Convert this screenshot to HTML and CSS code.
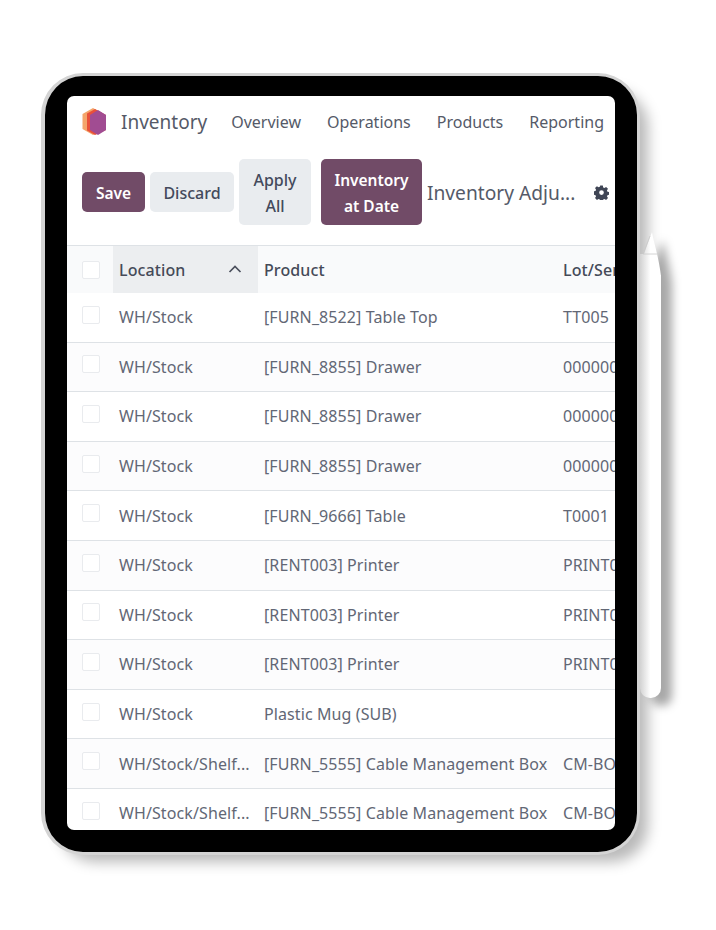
FILE: index.html
```html
<!DOCTYPE html>
<html lang="en">
<head>
    <meta charset="UTF-8">
    <meta name="viewport" content="width=device-width, initial-scale=1.0">
    <title>Inventory Adjustments</title>
    <link rel="stylesheet" href="styles.css">
</head>
<body>
    <div class="device">
        <div class="tablet">
            <div class="screen">
                <nav class="topbar">
                    <svg class="logo" width="26" height="28" viewBox="0 0 26 28">
                        <path d="M12 0 L22 5.5 L22 22 L12 27 L1.5 21 L1.5 6 Z" fill="#f4a56a"/>
                        <path d="M14 1 L25 7 L25 22 L14 27 L6 22.5 L6 5.5 Z" fill="#e8503a"/>
                        <path d="M17 2 L25 7 L25 22 L17 27 L9 22 L9 7 Z" fill="#a14c92"/>
                    </svg>
                    <span class="app-name">Inventory</span>
                    <a class="nav-link">Overview</a>
                    <a class="nav-link">Operations</a>
                    <a class="nav-link">Products</a>
                    <a class="nav-link">Reporting</a>
                </nav>

                <div class="toolbar">
                    <button class="btn btn-primary btn-save">Save</button>
                    <button class="btn btn-light btn-discard">Discard</button>
                    <button class="btn btn-light btn-tall">Apply<br>All</button>
                    <button class="btn btn-primary btn-tall btn-wide">Inventory<br>at Date</button>
                    <span class="page-title">Inventory Adju...</span>
                    <svg class="gear" width="15" height="15" viewBox="0 0 16 16">
                        <path fill-rule="evenodd" fill="#3f4555" d="M6.6 0.6h2.8l.4 2 1.3.6 1.8-1.1 2 2-1.1 1.8.6 1.3 2 .4v2.8l-2 .4-.6 1.3 1.1 1.8-2 2-1.8-1.1-1.3.6-.4 2H6.6l-.4-2-1.3-.6-1.8 1.1-2-2 1.1-1.8-.6-1.3-2-.4V6.8l2-.4.6-1.3-1.1-1.8 2-2 1.8 1.1 1.3-.6zM8 5.6a2.5 2.5 0 1 0 0 5 2.5 2.5 0 0 0 0-5z"/>
                    </svg>
                </div>

                <table class="list">
                    <thead>
                        <tr>
                            <th class="col-check"><span class="check"></span></th>
                            <th class="col-location sorted">
                                Location
                                <svg class="caret" width="14" height="8" viewBox="0 0 14 8"><path d="M1.5 7 L7 1.5 L12.5 7" fill="none" stroke="#4a4f5c" stroke-width="1.7"/></svg>
                            </th>
                            <th class="col-product">Product</th>
                            <th class="col-lot">Lot/Serial</th>
                        </tr>
                    </thead>
                    <tbody>
                        <tr><td><span class="check"></span></td><td>WH/Stock</td><td>[FURN_8522] Table Top</td><td>TT005</td></tr>
                        <tr><td><span class="check"></span></td><td>WH/Stock</td><td>[FURN_8855] Drawer</td><td>0000001</td></tr>
                        <tr><td><span class="check"></span></td><td>WH/Stock</td><td>[FURN_8855] Drawer</td><td>0000002</td></tr>
                        <tr><td><span class="check"></span></td><td>WH/Stock</td><td>[FURN_8855] Drawer</td><td>0000003</td></tr>
                        <tr><td><span class="check"></span></td><td>WH/Stock</td><td>[FURN_9666] Table</td><td>T0001</td></tr>
                        <tr><td><span class="check"></span></td><td>WH/Stock</td><td>[RENT003] Printer</td><td>PRINT001</td></tr>
                        <tr><td><span class="check"></span></td><td>WH/Stock</td><td>[RENT003] Printer</td><td>PRINT002</td></tr>
                        <tr><td><span class="check"></span></td><td>WH/Stock</td><td>[RENT003] Printer</td><td>PRINT003</td></tr>
                        <tr><td><span class="check"></span></td><td>WH/Stock</td><td>Plastic Mug (SUB)</td><td></td></tr>
                        <tr><td><span class="check"></span></td><td>WH/Stock/Shelf...</td><td>[FURN_5555] Cable Management Box</td><td>CM-BOX-001</td></tr>
                        <tr><td><span class="check"></span></td><td>WH/Stock/Shelf...</td><td>[FURN_5555] Cable Management Box</td><td>CM-BOX-002</td></tr>
                    </tbody>
                </table>
            </div>
        </div>

        <!-- pencil docked on the right edge of the tablet -->
        <div class="pencil">
            <svg class="pencil-tip" width="21" height="44" viewBox="0 0 21 44">
                <defs>
                    <linearGradient id="tipFade" x1="0" x2="1" y1="0" y2="0">
                        <stop offset="0" stop-color="#d2d2d2"/>
                        <stop offset="0.5" stop-color="#fff"/>
                    </linearGradient>
                </defs>
                <path d="M12 0 C14 12 19 26 21 44 L0 44 L0 22 L4 22 Z" fill="url(#tipFade)"/>
                <path d="M3 22 L10 4 M3 22 L17 22" fill="none" stroke="#c9c9c9" stroke-width="0.8"/>
            </svg>
            <div class="pencil-body"></div>
        </div>
    </div>
</body>
</html>
```

FILE: styles.css
```css
* {
    margin: 0;
    padding: 0;
    box-sizing: border-box;
}

body {
    font-family: "Noto Sans", "Open Sans", sans-serif;
    background: white;
    height: 930px;
    overflow: hidden;
    padding: 73px 0 0 41px;
}

.device {
    position: relative;
    width: 599px;
    height: 782px;
}

.tablet {
    width: 599px;
    height: 782px;
    background: #000;
    border: 3px solid #d4d4d4;
    border-left-width: 4px;
    border-radius: 42px;
    padding: 20px 22px 22px 22px;
    box-shadow: 13px 12px 14px -5px rgba(0, 0, 0, 0.28);
}

.screen {
    width: 548px;
    height: 734px;
    background: white;
    border-radius: 7px;
    overflow: hidden;
}

.pencil {
    position: absolute;
    left: 599px;
    top: 159px;
    width: 21px;
    filter: drop-shadow(11px 8px 5px rgba(0, 0, 0, 0.34));
}

.pencil-tip {
    display: block;
}

.pencil-body {
    width: 21px;
    height: 423px;
    margin-top: -1px;
    background: linear-gradient(90deg, #d2d2d2, #fff 50%);
    border-radius: 0 0 10px 10px;
}

.topbar {
    display: flex;
    align-items: center;
    height: 52px;
    padding-left: 14px;
}

.logo {
    margin-right: 14px;
    flex-shrink: 0;
}

.app-name {
    font-size: 19px;
    color: #555a68;
    margin-right: 24px;
}

.nav-link {
    font-size: 16px;
    color: #555a68;
    margin-right: 26px;
    white-space: nowrap;
}

.toolbar {
    display: flex;
    align-items: center;
    height: 97px;
    padding: 0 15px 9px;
    gap: 5px;
}

.btn {
    height: 40px;
    border: none;
    border-radius: 5px;
    padding-top: 2px;
    font-family: inherit;
    font-size: 16px;
    font-weight: 500;
    line-height: 26px;
    flex-shrink: 0;
}

.btn-primary {
    background-color: #714b67;
    color: white;
    font-weight: 600;
    font-size: 15.5px;
}

.btn-light {
    background-color: #e9ecef;
    color: #434a5c;
}

.btn-save {
    width: 63px;
}

.btn-discard {
    width: 84px;
}

.btn-tall {
    height: 66px;
    width: 72px;
}

.btn-wide {
    width: 101px;
    margin-left: 5px;
}

.page-title {
    font-size: 19.2px;
    color: #555a68;
    white-space: nowrap;
    margin-right: 14px;
}

.gear {
    flex-shrink: 0;
}

.list {
    width: 548px;
    table-layout: fixed;
    border-collapse: collapse;
    border-top: 1px solid #dee2e6;
    font-size: 16px;
    letter-spacing: 0.1px;
    color: #626775;
}

.list th {
    height: 47px;
    background: #f9fafb;
    color: #454a58;
    font-weight: 500;
    text-align: left;
    padding: 1px 6px 0;
}

.list td {
    height: 49.6px;
    padding: 0 6px;
    border-bottom: 1px solid #dee2e6;
    white-space: nowrap;
    overflow: hidden;
}

.list tbody tr:nth-child(even) td {
    background: #fcfcfd;
}

.col-check {
    width: 46px;
}

.col-location {
    width: 145px;
}

.col-product {
    width: 299px;
}

.col-lot {
    width: 58px;
}

.list th.sorted {
    background: #eceef0;
    position: relative;
}

.caret {
    position: absolute;
    right: 16px;
    top: 19px;
}

.check {
    display: block;
    width: 18px;
    height: 18px;
    margin-left: 9px;
    border: 1px solid #e9ebee;
    border-radius: 2px;
    background: white;
}

.list td .check {
    margin-bottom: 5px;
}
```
